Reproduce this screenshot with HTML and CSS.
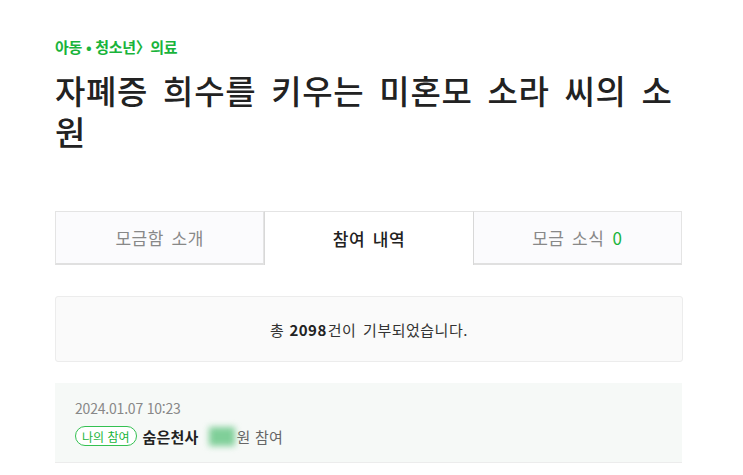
FILE: index.html
```html
<!DOCTYPE html>
<html lang="ko">
<head>
<meta charset="utf-8">
<link rel="stylesheet" href="styles.css">
</head>
<body>
<div class="page">
  <div class="category">아동 • 청소년〉의료</div>
  <h1 class="title">자폐증 희수를 키우는 미혼모 소라 씨의 소원</h1>
  <div class="tabs">
    <div class="tab">모금함 소개</div>
    <div class="tab active">참여 내역</div>
    <div class="tab">모금 소식<span class="count">0</span></div>
  </div>
  <div class="summary">총 <b>2098</b>건이 기부되었습니다.</div>
  <div class="item">
    <div class="date">2024.01.07 10:23</div>
    <div class="row">
      <span class="badge">나의 참여</span>
      <span class="name">숨은천사</span>
      <span class="amount"><span class="blur"></span>원 참여</span>
    </div>
  </div>
</div>
</body>
</html>
```

FILE: styles.css
```css
* { box-sizing: border-box; }
html, body { margin: 0; padding: 0; background: #fff; }
body {
  font-family: "Noto Sans CJK KR", "Noto Sans", sans-serif;
  color: #222;
}
.page {
  width: 683px;
  padding: 36px 0 0 55px;
}
.category {
  font-size: 15px;
  font-weight: 700;
  color: #19b43b;
  line-height: 22px;
  letter-spacing: -0.3px;
}
.title {
  width: 625px;
  margin: 12px 0 0;
  font-size: 33px;
  font-weight: 500;
  line-height: 41px;
  letter-spacing: 0.7px;
  word-spacing: 5px;
  word-break: break-all;
  color: #222;
}
.tabs {
  display: flex;
  margin-top: 59px;
  width: 627px;
}
.tab {
  flex: 1;
  height: 54px;
  display: flex;
  align-items: center;
  justify-content: center;
  font-size: 17px;
  color: #888;
  background: #fbfbfd;
  border: 1px solid #e4e4e4;
  border-bottom: 2px solid #e0e0e0;
  letter-spacing: 0.6px;
  word-spacing: 2px;
}
.tab + .tab { border-left: none; }
.tab.active {
  background: #fff;
  color: #222;
  font-weight: 500;
  border-left: 1px solid #d8d8d8;
  border-right: 1px solid #d8d8d8;
  border-bottom: none;
}
.count { color: #19b43b; margin-left: 8px; }
.summary {
  margin-top: 31px;
  width: 628px;
  height: 66px;
  border: 1px solid #ececec;
  border-radius: 3px;
  background: #fafafa;
  display: flex;
  align-items: center;
  justify-content: center;
  font-size: 15px;
  color: #333;
  letter-spacing: 0.5px;
  word-spacing: 2px;
}
.summary b { font-weight: 700; color: #222; margin: 0 1px 0 5px; }
.item {
  margin-top: 21px;
  width: 627px;
  height: 80px;
  background: #f6f9f7;
  border-bottom: 1px solid #ececec;
  padding: 16px 0 0 20px;
}
.date {
  font-size: 14px;
  color: #888;
  line-height: 18px;
  letter-spacing: -0.2px;
}
.row {
  display: flex;
  align-items: center;
  margin-top: 8px;
  height: 22px;
}
.badge {
  display: inline-flex;
  align-items: center;
  height: 20px;
  padding: 0 6px;
  border: 1px solid #34c152;
  border-radius: 10px;
  color: #19b43b;
  font-size: 12px;
  letter-spacing: 0px;
  background: #fff;
}
.name {
  margin-left: 6px;
  font-size: 15px;
  font-weight: 700;
  color: #222;
  letter-spacing: 0.2px;
}
.amount {
  margin-left: 10px;
  display: inline-flex;
  align-items: center;
  font-size: 15px;
  color: #666;
  letter-spacing: 0.2px;
}
.blur {
  display: inline-block;
  width: 26px;
  height: 19px;
  margin-right: 2px;
  background: #80cf99;
  filter: blur(3px);
}
```
